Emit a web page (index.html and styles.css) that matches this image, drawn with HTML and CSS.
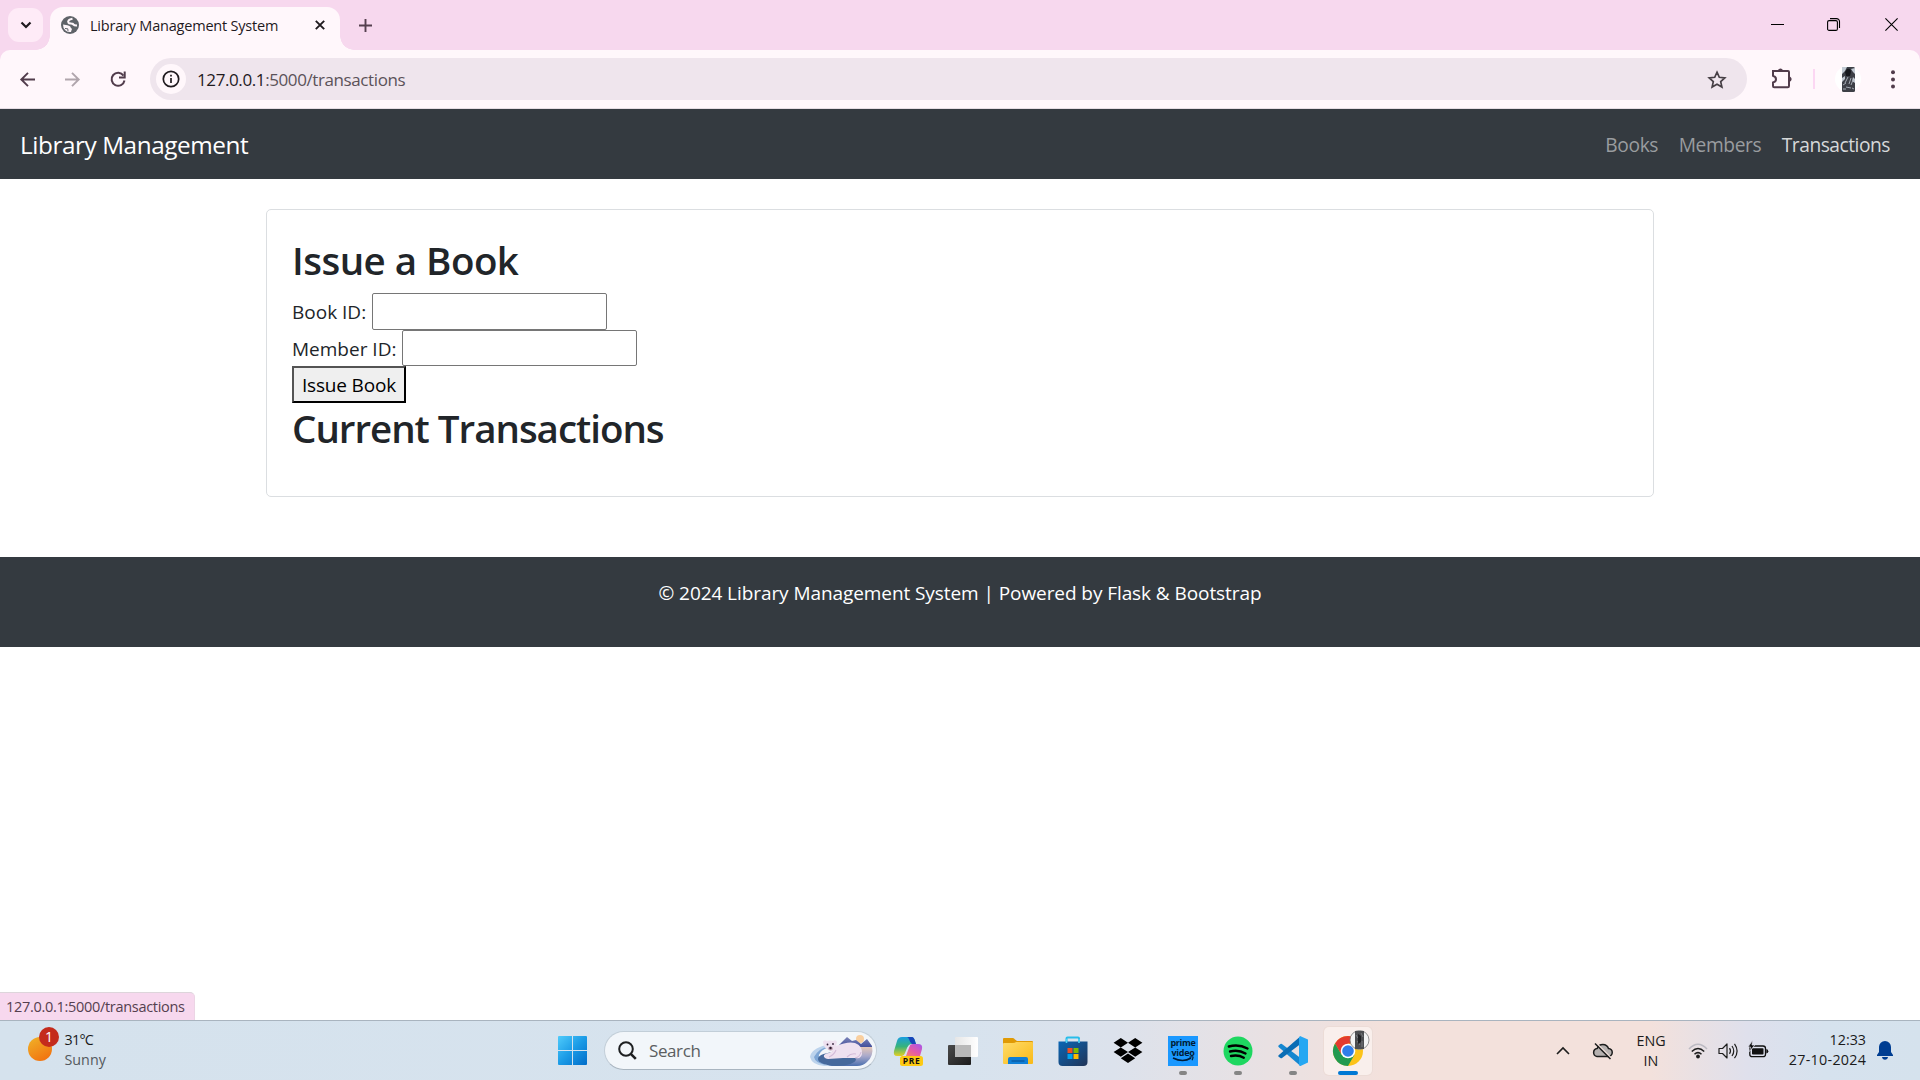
FILE: index.html
```html
<!DOCTYPE html>
<html lang="en">
<head>
<meta charset="utf-8">
<title>Library Management System</title>
<link rel="stylesheet" href="styles.css">
</head>
<body>
<header class="tabstrip">
  <button class="tab-search"><svg width="12" height="8" viewBox="0 0 12 8"><path d="M1.5 1.5 6 6l4.500-4.500" fill="none" stroke="#1f1a1e" stroke-width="2.200"/></svg></button>
  <div class="tab">
    <svg class="globe" width="18" height="18" viewBox="0 0 18 18"><circle cx="9" cy="9" r="9" fill="#5f6368"/><path d="M11.500 2.800C8 3.500 6.500 5 7.500 6.600 8.300 7.800 10 7.300 11.500 7.800 12.800 8.400 12.500 9.800 16 9.400" fill="none" stroke="#fff7fb" stroke-width="2.100"/><path d="M2 8.600 6.500 9.300Q9.700 10 9.600 11.600L11 13Q10.500 14 10 16A7.100 7.100 0 0 1 2 8.600Z" fill="#fff7fb"/><path d="M4 12.500 6.800 12.800 7 15.200" fill="none" stroke="#5f6368" stroke-width="1"/></svg>
    <span class="tab-title">Library Management System</span>
    <svg class="tab-close" width="10" height="10" viewBox="0 0 10 10"><path d="m.8.8 8.400 8.400M9.200.8.800 9.200" stroke="#1f1a1e" stroke-width="1.900"/></svg>
  </div>
  <svg class="new-tab" width="13" height="13" viewBox="0 0 13 13"><path d="M6.500 0v13M0 6.500h13" stroke="#55404f" stroke-width="1.900"/></svg>
  <div class="window-buttons">
    <svg width="13" height="13" viewBox="0 0 13 13"><path d="M0 6.500h13" stroke="#000" stroke-width="1"/></svg>
    <svg width="13" height="13" viewBox="0 0 13 13"><rect x=".6" y="2.600" width="9.800" height="9.800" rx="1.500" fill="none" stroke="#000" stroke-width="1.100"/><path d="M3 .6h6.500a3 3 0 0 1 3 3V10" fill="none" stroke="#000" stroke-width="1.100"/></svg>
    <svg class="win-close" width="13" height="13" viewBox="0 0 13 13"><path d="m.4.4 12.200 12.200M12.600.4.400 12.600" stroke="#000" stroke-width="1.100"/></svg>
  </div>
</header>
<div class="toolbar-wrap">
<div class="toolbar">
  <svg class="back" width="15" height="15" viewBox="0 0 15 15"><path d="M15 7.500H1.500M8 .8 1.300 7.500 8 14.200" fill="none" stroke="#513c4b" stroke-width="1.900"/></svg>
  <svg class="forward" width="15" height="15" viewBox="0 0 15 15"><path d="M0 7.500h13.500M7 .8l6.700 6.700L7 14.200" fill="none" stroke="#b0a5ac" stroke-width="1.900"/></svg>
  <svg class="reload" width="16" height="16" viewBox="0 0 16 16"><path d="M13.500 4.600A6.500 6.500 0 1 0 14.500 9.500" fill="none" stroke="#513c4b" stroke-width="2"/><path d="M14.700.5v6H9" fill="none" stroke="#513c4b" stroke-width="2"/></svg>
  <div class="omnibox">
    <span class="site-info"><svg width="18" height="18" viewBox="0 0 18 18"><circle cx="9" cy="9" r="7.700" fill="none" stroke="#1f1a1e" stroke-width="1.700"/><path d="M9 8v5M9 4.800v1.800" stroke="#1f1a1e" stroke-width="1.700"/></svg></span>
    <span class="url">127.0.0.1<span class="url-path">:5000/transactions</span></span>
    <svg class="star" width="20" height="19" viewBox="0 0 20 19"><path d="m10 2.200 2.300 5.100 5.500.6-4.100 3.700 1.200 5.500L10 14.300l-4.900 2.800 1.200-5.500-4.100-3.700 5.500-.6Z" fill="none" stroke="#463f45" stroke-width="1.700"/></svg>
  </div>
  <svg class="puzzle" width="22" height="21" viewBox="0 0 22 21"><path d="M2 3H17q1 0 1 1V18q0 1.200-1.200 1.200H3.200Q2 19.200 2 18v-3.500c4-1.200 4-5.500 0-6.700V4Q2 3 2 3Z" fill="none" stroke="#513c4b" stroke-width="2"/><path d="M7 3c0-3.500 5-3.500 5 0ZM18 8.500c3.500.3 3.500 5 0 5.300Z" fill="#513c4b"/></svg>
  <span class="divider"></span>
  <span class="avatar"><svg width="13" height="25" viewBox="0 0 13 25"><rect width="13" height="25" rx="1.500" fill="#3d4047"/><path d="M0 0h5L3 4 0 7ZM9 2l4-1v6l-2-2ZM0 11l3-2v3l-3 3ZM11 10l2 2v4l-3-2Z" fill="#c1c9d2"/><path d="M5 2q4-1 4 3l-1 4H4L3 5Z" fill="#17191e"/><path d="M6 10 3 16M9 11l-2 6M11 13l-2 5M1 18l3-2M4 20l5 1M1 22h3M10 21l2 1" stroke="#a4abb3" stroke-width="1"/></svg></span>
  <svg class="kebab" width="4" height="19" viewBox="0 0 4 19"><g fill="#513c4b"><circle cx="2" cy="2.200" r="2"/><circle cx="2" cy="9.400" r="2"/><circle cx="2" cy="16.600" r="2"/></g></svg>
</div>
</div>

<nav class="navbar">
  <a class="brand">Library Management</a>
  <div class="nav-links">
    <a>Books</a>
    <a>Members</a>
    <a class="active">Transactions</a>
  </div>
</nav>
<main class="card">
  <h2 class="h-issue">Issue a Book</h2>
  <div class="field"><label>Book ID:</label><input type="text"></div>
  <div class="field"><label>Member ID:</label><input type="text"></div>
  <button class="submit">Issue Book</button>
  <h2 class="h-current">Current Transactions</h2>
</main>
<footer class="footer">© 2024 Library Management System | Powered by Flask &amp; Bootstrap</footer>
<div class="status">127.0.0.1:5000/transactions</div>

<div class="taskbar">
  <div class="weather">
    <span class="sun"><span class="badge">1</span></span>
    <div class="weather-text"><span class="temp">31°C</span><span class="cond">Sunny</span></div>
  </div>
  <svg class="start" width="29" height="29" viewBox="0 0 29 29"><defs><linearGradient id="win" x1="0" y1="0" x2="29" y2="29" gradientUnits="userSpaceOnUse"><stop offset="0" stop-color="#4fcbfb"/><stop offset=".5" stop-color="#1b9be6"/><stop offset="1" stop-color="#006cc9"/></linearGradient></defs><path fill="url(#win)" d="M1 0h13v14H0V1q0-1 1-1ZM15 0h13q1 0 1 1v13H15ZM0 15h14v14H1q-1 0-1-1ZM15 15h14v13q0 1-1 1H15Z"/></svg>
  <div class="search">
    <svg width="19" height="19" viewBox="0 0 19 19"><circle cx="8" cy="8" r="6.800" fill="none" stroke="#1d1f21" stroke-width="2"/><path d="m12.800 12.800 5 5" stroke="#1d1f21" stroke-width="2.600"/></svg>
    <span class="search-text">Search</span>
    <svg class="bear" width="64" height="32" viewBox="0 0 64 32">
      <defs><linearGradient id="sea" x1="0" x2="0" y1="0" y2="1"><stop offset="0" stop-color="#eccbb6"/><stop offset=".5" stop-color="#a9a9cb"/><stop offset="1" stop-color="#4b6fae"/></linearGradient><linearGradient id="mt" x1="0" x2="0" y1="0" y2="1"><stop offset="0" stop-color="#7b83b8"/><stop offset="1" stop-color="#44509c"/></linearGradient></defs>
      <circle cx="51" cy="4" r="4" fill="#f9cf9f"/>
      <path d="M30 11h33q2 10-5 16-4 4-10 4H20Q10 26 30 11Z" fill="url(#sea)"/>
      <path d="M30 10 38 2l5 4 4-1 5 4 6-5 5 7v1H32Z" fill="url(#mt)"/>
      <path d="M17 10Q2 14 1 22q2 8 14 9h8Q5 26 9 19q3-4 9-6Z" fill="#bcd3ec"/>
      <path d="M5 22q5-9 14-10-10 5-9 10 1 5 7 8Q6 28 5 22Z" fill="#7ea6d5"/>
      <ellipse cx="28" cy="24" rx="19" ry="7" fill="#45699c"/>
      <path d="M14 7q1-3 4-1 3-1 6 0 3-2 4 1l-1 4q12-5 19-3 8 3 7 11-1 5-6 4H34l-15 1q-5-1-4-4 2-2 5-2l4-2q-7-1-9-5Z" fill="#eee1f0"/>
      <path d="M27 15q-2 5-7 7M38 22q4-4 9-3M46 23q5-1 6-6" fill="none" stroke="#d3bbd9" stroke-width="1.100"/>
      <circle cx="18.500" cy="9.500" r=".9" fill="#3a2740"/><circle cx="24" cy="9" r=".9" fill="#3a2740"/><ellipse cx="21.500" cy="13.500" rx="2.400" ry="2" fill="#bea2b4"/><circle cx="21.500" cy="13" r="1.200" fill="#2b1a2c"/>
    </svg>
  </div>
  <div class="apps">
    <span class="app"><svg width="30" height="30" viewBox="0 0 30 30"><defs><linearGradient id="c1" x1="0" x2="0" y1="0" y2="1"><stop offset="0" stop-color="#199ee0"/><stop offset=".5" stop-color="#36b37c"/><stop offset="1" stop-color="#e4cf24"/></linearGradient><linearGradient id="c2" x1="1" x2="0" y1="0" y2="1"><stop offset="0" stop-color="#a557ed"/><stop offset=".5" stop-color="#e35aa9"/><stop offset="1" stop-color="#fb8c57"/></linearGradient></defs><path d="M9 1h9q3 0 4 4l1 3h-5q-2 0-3 3l-2 6q-1 3-4 3H4q-4 0-3-5L4 5q1-4 5-4Z" fill="url(#c1)"/><path d="M14 1h5q2 0 3 4l1 3h-4q-2-1-3-5-1-2-2-2Z" fill="#1746b9"/><path d="M20 8h5q5 0 4 5l-2 7H9q3 0 4-3l3-6q1-3 4-3Z" fill="url(#c2)"/><path d="M17 9q-2 0-3 3l-2 5q-1 3-3 3h4l4-11Z" fill="#dcdff0"/><rect x="7" y="20" width="23" height="10" rx="2.500" fill="#fdca13"/><text x="18.500" y="27.800" class="pre">PRE</text></svg></span>
    <span class="app"><svg width="30" height="30" viewBox="0 0 30 30"><defs><linearGradient id="tv" x1="0" x2="1" y1="0" y2="1"><stop offset="0" stop-color="#4a4a4a"/><stop offset="1" stop-color="#1c1c1c"/></linearGradient><linearGradient id="tv2" x1="0" x2="1" y1="0" y2="0"><stop offset="0" stop-color="#e6e6e6"/><stop offset="1" stop-color="#fff"/></linearGradient></defs><rect x="0" y="9" width="23" height="20" rx="1" fill="url(#tv)"/><rect x="7" y="1" width="23" height="20" rx="1" fill="url(#tv2)"/><path d="M7 9h16v12H7Z" fill="#b9b9b9"/></svg></span>
    <span class="app"><svg width="30" height="30" viewBox="0 0 30 30"><defs><linearGradient id="fo" x1="0" x2="1" y1="0" y2="1"><stop offset="0" stop-color="#ffdc6a"/><stop offset="1" stop-color="#f9b916"/></linearGradient></defs><path d="M0 3q0-1 1-1h9q1 0 2 1.500L14 5h15q1 0 1 1v6H0Z" fill="#e09a05"/><path d="M0 8q0-1 1-1h9q2 0 3-1h16q1 0 1 1v20q0 1-1 1H1q-1 0-1-1Z" fill="url(#fo)"/><path d="M5 28v-5q0-2 2-2h16q2 0 2 2v5Z" fill="#0f7fd6"/><path d="M8.500 25h13" stroke="#08549b" stroke-width="1.200"/></svg></span>
    <span class="app"><svg width="30" height="30" viewBox="0 0 30 30"><defs><linearGradient id="ms" x1="0" x2="1" y1="0" y2="1"><stop offset="0" stop-color="#0a66b5"/><stop offset="1" stop-color="#213457"/></linearGradient></defs><path d="M8.500 7V2.500q0-1 1-1h10.500q1 0 1 1V7" fill="none" stroke="#29bdea" stroke-width="2"/><path d="M.5 5.500h29V26q0 4-4 4h-21q-4 0-4-4Z" fill="url(#ms)"/><path d="M8.500 3v4M21 3v4" stroke="#4fd3f6" stroke-width="1.600"/><path d="M9.500 12h5v5h-5Z" fill="#f25022"/><path d="M15.500 12h5v5h-5Z" fill="#7fba00"/><path d="M9.500 18h5v5h-5Z" fill="#00a4ef"/><path d="M15.500 18h5v5h-5Z" fill="#ffb900"/></svg></span>
    <span class="app"><svg width="30" height="30" viewBox="0 0 30 30"><path d="m7.800 2 7.200 4.700-7.200 4.700L.6 6.700ZM22.200 2l7.200 4.700-7.200 4.700L15 6.700ZM7.800 11.400l7.200 4.700-7.200 4.700L.6 16.100ZM22.200 11.400l7.200 4.700-7.200 4.700L15 16.100ZM15 17.600l7.200 4.700L15 27l-7.200-4.700Z" fill="#000"/></svg></span>
    <span class="app run"><svg width="30" height="30" viewBox="0 0 30 30"><rect width="30" height="30" fill="#1a98ff"/><text x="15" y="10.200" class="prime">prime</text><text x="15" y="19.600" class="prime">video</text><path d="M5 22q10 5 18 0" fill="none" stroke="#001c36" stroke-width="1.600"/><path d="M21.500 21.200q4-1 3.500.3-.2 1.500-1 2.800" fill="none" stroke="#001c36" stroke-width="1.200"/></svg></span>
    <span class="app run"><svg width="30" height="30" viewBox="0 0 30 30"><circle cx="15" cy="15" r="14.500" fill="#1ed760"/><path d="M5.800 10.500q10-2.700 18.700 2M7 15.500q8.500-2.200 15.500 2M8 20q7-1.700 12.800 1.700" fill="none" stroke="#000" stroke-width="2.400" stroke-linecap="round"/></svg></span>
    <span class="app run"><svg width="30" height="30" viewBox="0 0 30 30"><path d="M.5 9.500 2.400 8q.8-.5 1.500 0L22.500 22v7.900L.6 11Q0 10.200.5 9.500Z" fill="#1687d0"/><path d="M22.500.2.600 19.200q-.7.800 0 1.500L2.500 22q.7.500 1.500 0L22.500 8Z" fill="#0a6db5"/><path d="M22.500.2 30 3.500v23l-7.500 3.400q-1 0-1.500-1V1.200q.5-1 1.500-1Z" fill="#26a7f2"/></svg></span>
    <span class="app chrome"><svg width="36" height="40" viewBox="0 0 36 40"><g transform="translate(0 5)"><circle cx="15" cy="15" r="15" fill="#fcc31a"/><path d="M15 7.500H28A15 15 0 0 0 2 7.500L8.500 18.700 15 15Z" fill="#e33b2e"/><path d="M2 7.500A15 15 0 0 0 15 30l6.500-11.300L15 15 8.500 18.700Z" fill="#219a50"/><circle cx="15" cy="15" r="7.300" fill="#fff"/><circle cx="15" cy="15" r="5.800" fill="#2f7de9"/></g><circle cx="26.500" cy="9" r="9.500" fill="#f4f4f4" stroke="#7b7b7b" stroke-width=".8"/><path d="M22 0h9v18h-9Z" fill="#4c4d50"/><path d="m23 4 2 3M28 2l2 4M24 10l3 4M29 10v6" stroke="#77797d"/><path d="m25 3 3 2v6l-3 2Z" fill="#1f2023"/></svg></span>
  </div>
  <div class="tray">
    <svg class="chev" width="14" height="8" viewBox="0 0 14 8"><path d="m1 7 6-6 6 6" fill="none" stroke="#1d1d1d" stroke-width="1.600"/></svg>
    <svg class="cloud" width="21" height="18" viewBox="0 0 21 18"><path d="M5 14.500h11a4 4 0 0 0 .5-8A6 6 0 0 0 5.200 6.400 4.100 4.100 0 0 0 5 14.500Z" fill="#b6b1b0" stroke="#1d1d1d" stroke-width="1.500"/><path d="M4 .8 19.500 16.300" stroke="#f3e1dc" stroke-width="1.500"/><path d="M3 1.500 18.500 17" stroke="#1d1d1d" stroke-width="1.500"/></svg>
    <div class="lang"><span>ENG</span><span>IN</span></div>
    <svg class="wifi" width="20" height="16" viewBox="0 0 20 16"><path d="M1 6Q10-3.500 19 6" fill="none" stroke="#bcbac2" stroke-width="1.500"/><path d="M3.800 8.500q6.200-6 12.400 0M6.500 11.200q3.500-3.200 7 0" fill="none" stroke="#1d1d1d" stroke-width="1.500"/><circle cx="10" cy="13.500" r="1.900" fill="#1d1d1d"/></svg>
    <svg class="vol" width="21" height="18" viewBox="0 0 21 18"><path d="M1 6.500h3.500L9 2v14l-4.500-4.500H1Z" fill="none" stroke="#1d1d1d" stroke-width="1.200" stroke-linejoin="round"/><path d="M11.500 6.200q2 2.800 0 5.600M14 4q3.500 5 0 10M16.500 1.800q5.200 7.200 0 14.400" fill="none" stroke="#1d1d1d" stroke-width="1.200"/></svg>
    <svg class="batt" width="21" height="17" viewBox="0 0 21 17"><rect x="1.800" y="4" width="15.700" height="10.700" rx="2.500" fill="none" stroke="#111" stroke-width="1.300"/><rect x="4" y="6.200" width="11.500" height="6.300" rx=".8" fill="#111"/><path d="M18.300 7q2 .3 2 2.300t-2 2.300Z" fill="#111"/><path d="M4.500-1.500 0 5h2.500L1.500 9.500 6.800 3H4Z" fill="#111" stroke="#dfe0ec" stroke-width=".7"/></svg>
    <div class="clock"><span>12:33</span><span class="date">27-10-2024</span></div>
    <svg class="bell" width="16" height="19" viewBox="0 0 16 19"><path d="M8 0a6 6 0 0 1 6 6v5l2 3v1H0v-1l2-3V6a6 6 0 0 1 6-6ZM5 16h6q-.5 2.800-3 2.800T5 16Z" fill="#003e92"/></svg>
  </div>
</div>
</body>
</html>
```
FILE: styles.css
```css
* { box-sizing: border-box; }
body { margin: 0; width: 1920px; height: 1080px; overflow: hidden; display: flex; flex-direction: column; background: #fff; font-family: "Open Sans", "Noto Sans", sans-serif; color: #212529; }
svg { display: block; flex: none; overflow: visible; }
button { margin: 0; font-family: inherit; }
span, a, label { white-space: nowrap; }

/* browser window */
.tabstrip { flex: none; height: 50px; background: #f7d8ee; display: flex; align-items: flex-start; }
.tab-search { margin: 8px 0 0 8px; width: 35px; height: 34px; padding: 0; border: 0; border-radius: 11px; background: #feebf7; display: flex; align-items: center; justify-content: center; }
.tab { position: relative; margin: 7px 0 0 7px; width: 290px; height: 43px; padding: 0 15px 7px 11px; background: #fff7fb; border-radius: 13px 13px 0 0; display: flex; align-items: center; }
.tab::before, .tab::after { content: ""; position: absolute; bottom: 0; width: 14px; height: 14px; }
.tab::before { left: -14px; background: radial-gradient(circle at 0 0, transparent 13.500px, #fff7fb 14px); }
.tab::after { right: -14px; background: radial-gradient(circle at 100% 0, transparent 13.500px, #fff7fb 14px); }
.tab-title { margin-left: 11px; font-size: 14.500px; letter-spacing: -.21px; color: #1f1a1e; }
.tab-close { margin-left: auto; }
.new-tab { margin: 19px 0 0 19px; }
.window-buttons { margin: 18px 22px 0 auto; display: flex; gap: 43px; }
.win-close { margin-left: 2px; }
.toolbar-wrap { flex: none; height: 59px; background: #f7d8ee; }
.toolbar { height: 59px; border-radius: 10px 10px 0 0; border-bottom: 1px solid #e5dce3; background: #fff7fb; display: flex; align-items: center; }
.back { margin-left: 20px; }
.forward { margin-left: 30px; }
.reload { margin-left: 30px; }
.omnibox { margin-left: 24px; width: 1597px; height: 42px; border-radius: 21px; background: #efe5ed; display: flex; align-items: center; padding: 0 20px 0 6px; }
.site-info { width: 30px; height: 30px; border-radius: 50%; background: #fff7fb; display: flex; align-items: center; justify-content: center; }
.url { margin-left: 11px; font-size: 17px; letter-spacing: -.4px; color: #1f1a1e; }
.url-path { color: #5b5259; }
.star { margin-left: auto; }
.puzzle { margin-left: 24px; margin-top: -2px; }
.divider { margin-left: 20px; width: 2px; height: 20px; background: #fcd7f3; }
.avatar { margin-left: 20px; width: 26px; height: 26px; border-radius: 50%; background: #fff; display: flex; justify-content: center; align-items: center; }
.kebab { margin-left: 29.500px; }

/* library page */
.navbar { flex: none; height: 70px; background: #343a40; display: flex; align-items: center; justify-content: space-between; padding: 1px 30px 0 20px; }
.brand { font-size: 24.300px; letter-spacing: -.42px; color: #fff; }
.nav-links { display: flex; gap: 20.500px; font-size: 19.200px; letter-spacing: -.38px; color: #999c9f; }
.active { color: #d6d8d9; letter-spacing: -.48px; }
.card { flex: none; width: 1388px; height: 288px; margin: 30px auto 0; border: 1px solid #dbdee1; border-radius: 5px; padding: 25px; display: flex; flex-direction: column; align-items: flex-start; }
.card h2 { margin: 0 0 9px; padding-top: 1px; font-size: 38.500px; line-height: 48px; font-weight: 600; white-space: nowrap; }
.h-issue { letter-spacing: -.52px; }
.card .h-current { letter-spacing: -1.020px; }
.field { display: flex; align-items: center; gap: 5.500px; height: 36.700px; font-size: 19px; }
.field label { padding-top: 1px; }
.field input { width: 235px; height: 36.700px; padding: 0; border: 1px solid #767676; border-radius: 2px; background: #fff; }
.submit { height: 37px; width: 114px; padding: 0; border: 2px outset #000; background: #efefef; color: #000; font-size: 19px; letter-spacing: -.17px; white-space: nowrap; }
.footer { flex: none; height: 90px; margin-top: 60px; background: #343a40; color: #fff; text-align: center; font-size: 19px; letter-spacing: -.075px; line-height: 30px; padding-top: 21px; }
.status { position: absolute; left: 0; top: 992px; width: 195px; height: 28px; padding-left: 6px; background: #f7d8ee; border-top: 1px solid #ddd5db; border-right: 1px solid #ecd5e5; border-radius: 0 5px 0 0; font-size: 14.500px; letter-spacing: -.3px; line-height: 28px; color: #55404f; white-space: nowrap; }

/* taskbar */
.taskbar { margin-top: auto; flex: none; height: 60px; border-top: 1px solid #a9b4bf; background: linear-gradient(90deg, #d5e2ed 0, #d7e3ee 50%, #dce2ec 58%, #e9e1e3 66%, #f3e1dc 72%, #f3e1dc 86%, #dfe0ec 91%, #d6e2ee 95%, #d5e2ed 100%); display: flex; align-items: center; font-size: 14.300px; color: #1b1b1b; }
.weather { width: 558px; padding-left: 28px; display: flex; align-items: center; }
.sun { position: relative; width: 24px; height: 24px; border-radius: 50%; background: linear-gradient(150deg, #f0b429, #f26a0c); margin-top: -3px; }
.badge { position: absolute; left: 11px; top: -10px; width: 20px; height: 20px; border-radius: 50%; background: #c42b1c; color: #fff; font-size: 14px; line-height: 20px; text-align: center; }
.weather-text { margin: -2px 0 0 12.500px; display: flex; flex-direction: column; line-height: 20px; }
.temp { letter-spacing: -.7px; }
.cond { color: #54595e; }
.search { margin-left: 17px; width: 273px; height: 39px; border-radius: 20px; border: 1px solid #c2ced8; border-bottom-color: #a9b5c0; background: #f2f6fa; display: flex; align-items: center; padding: 0 3px 0 13px; }
.search-text { margin-left: 12px; font-size: 17px; letter-spacing: -.4px; color: #5b5e61; }
.bear { margin-left: auto; }
.apps { display: flex; margin-left: 7px; gap: 7px; }
.app { position: relative; width: 48px; height: 48px; display: flex; align-items: center; justify-content: center; }
.run::after, .chrome::after { content: ""; position: absolute; bottom: 0; left: 20px; width: 8px; height: 4px; border-radius: 2px; background: #858585; }
.chrome { background: #f9efec; border-radius: 5px; box-shadow: 0 0 0 1px #ecdcd7; padding-left: 6px; }
.chrome::after { left: 14px; width: 20px; background: #0078d4; }
.pre { font: 700 8.500px "Open Sans", sans-serif; text-anchor: middle; letter-spacing: .6px; fill: #111; }
.prime { font: 700 9px "Open Sans", sans-serif; text-anchor: middle; letter-spacing: -.3px; fill: #001c36; }
.tray { margin-left: auto; padding-right: 27px; display: flex; align-items: center; }
.cloud { margin-left: 22px; }
.lang { margin: 0 0 0 23px; width: 30px; display: flex; flex-direction: column; align-items: center; line-height: 20px; }
.wifi { margin-left: 22px; }
.vol { margin-left: 10px; }
.batt { margin-left: 9px; }
.clock { width: 97px; margin-top: -2px; display: flex; flex-direction: column; align-items: flex-end; line-height: 20px; }
.date { letter-spacing: .3px; margin-right: -.3px; }
.bell { margin-left: 11px; }
```
